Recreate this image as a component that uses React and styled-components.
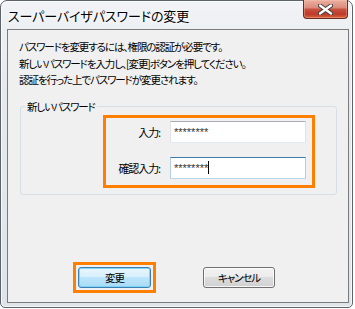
import React from 'react'
import styled, {createGlobalStyle} from 'styled-components'

const GlobalStyle = createGlobalStyle`
  html, body {
    margin: 0;
    padding: 0;
    background: #fff;
  }
  body {
    font-family: "Noto Sans CJK JP", "Noto Sans", sans-serif;
    font-feature-settings: "palt";
    color: #000;
  }
`

const Window = styled.div`
  box-sizing: border-box;
  width: 353px;
  height: 308px;
  display: flex;
  flex-direction: column;
  padding: 0 3px 4px 6px;
  border: 1px solid #5d636b;
  border-radius: 7px 7px 5px 5px;
  background: linear-gradient(180deg, #f1f3f6 0%, #e6eaee 25%, #dfe4e9 100%);
  box-shadow: inset 0 0 0 1px rgba(255, 255, 255, 0.7);
`

const TitleBar = styled.div`
  height: 28px;
  display: flex;
  align-items: flex-start;
`

const Title = styled.div`
  padding: 5px 0 0 1px;
  font-size: 13px;
  letter-spacing: -0.1px;
  line-height: 20px;
  text-shadow: 0 0 6px #fff, 0 0 3px #fff;
`

const CloseButton = styled.div`
  margin: -1px 1px 0 auto;
  width: 45px;
  height: 19px;
  box-sizing: border-box;
  display: flex;
  align-items: center;
  justify-content: center;
  border: 1px solid #6b2a22;
  border-top: none;
  border-radius: 0 0 4px 4px;
  background: linear-gradient(180deg, #eab0a2 0%, #dc8c7c 42%, #c7513f 52%, #bf3a2b 78%, #d7633c 100%);
  box-shadow: inset 0 0 0 1px rgba(255, 200, 180, 0.35);
`

const Client = styled.div`
  flex: 1;
  display: flex;
  flex-direction: column;
  border: 1px solid #7b7b7b;
  background: #f0f0f0;
  font-size: 10.5px;
  letter-spacing: -1.1px;
`

const Message = styled.p`
  margin: 0;
  padding: 9px 0 0 11px;
  line-height: 16.5px;
`

const Group = styled.fieldset`
  margin: 11px 11px 0 12px;
  padding: 1px 0 6px 4px;
  border: 1px solid #d5dfe5;
  border-radius: 3px;
  min-width: 0;
`

const Legend = styled.legend`
  padding: 0 2px;
  line-height: 14px;
`

const Highlight = styled.div`
  border: 3px solid #ff8000;
  padding: ${p => p.$pad || '2px'};
  width: ${p => p.$width || 'auto'};
  margin-left: ${p => p.$left || '0'};
`

const FieldGrid = styled.div`
  display: grid;
  grid-template-columns: 54px 136px;
  column-gap: 10px;
  row-gap: 14px;
  align-items: center;
`

const Label = styled.div`
  text-align: right;
  line-height: 14px;
  font-size: 11px;
  letter-spacing: -1.1px;
  white-space: nowrap;
`

const TextBox = styled.div`
  box-sizing: border-box;
  height: 22px;
  padding: 3px 3px 0;
  background: #fff;
  border: 1px solid;
  border-color: ${p => p.$focused ? '#3d7bad #b5cfe7 #b7d9ed #b5cfe7' : '#abadb3 #e2e3ea #e3e9ef #e2e3ea'};
  font-family: "Liberation Sans", sans-serif;
  font-size: 11px;
  letter-spacing: 0;
  line-height: 14px;
  color: #333;
  display: flex;
  align-items: flex-start;
`

const Caret = styled.span`
  display: inline-block;
  width: 1px;
  height: 13px;
  background: #000;
`

const ButtonRow = styled.div`
  margin-top: auto;
  padding: 0 0 9px 65px;
  display: flex;
  align-items: center;
  gap: 47px;
`

const Button = styled.div`
  box-sizing: border-box;
  width: ${p => p.$default ? '73px' : '72px'};
  height: 21px;
  display: flex;
  align-items: center;
  justify-content: center;
  border-radius: 3px;
  border: 1px solid ${p => p.$default ? '#3c7fb1' : '#707070'};
  background: ${p => p.$default
    ? 'linear-gradient(180deg, #e9f6fd 0%, #d8effb 45%, #bde5fb 50%, #a9dbf6 100%)'
    : 'linear-gradient(180deg, #f3f3f3 0%, #ebebeb 45%, #dddddd 50%, #d0d0d0 100%)'};
  box-shadow: inset 0 0 0 1px ${p => p.$default ? 'rgba(120, 210, 250, 0.9)' : 'rgba(255, 255, 255, 0.8)'};
`

const CloseGlyph = () => (
  <svg width="15" height="11" viewBox="0 0 15 11">
    <path d="M2 1.5 L13 9.5 M13 1.5 L2 9.5" stroke="#3b3b3b" strokeWidth="4.2" strokeLinecap="round" fill="none"/>
    <path d="M2 1.5 L13 9.5 M13 1.5 L2 9.5" stroke="#fff" strokeWidth="2.4" strokeLinecap="round" fill="none"/>
  </svg>
)

export default function App() {
  return (
    <>
      <GlobalStyle/>
      <Window>
        <TitleBar>
          <Title>スーパーバイザパスワードの変更</Title>
          <CloseButton><CloseGlyph/></CloseButton>
        </TitleBar>
        <Client>
          <Message>
            パスワードを変更するには、権限の認証が必要です。<br/>
            新しいパスワードを入力し、[変更]ボタンを押してください。<br/>
            認証を行った上でパスワードが変更されます。
          </Message>
          <Group>
            <Legend>新しいパスワード</Legend>
            <Highlight $width="200px" $left="78px" $pad="3px 6px 6px 0">
              <FieldGrid>
                <Label>入力:</Label>
                <TextBox>********</TextBox>
                <Label>確認入力:</Label>
                <TextBox $focused>********<Caret/></TextBox>
              </FieldGrid>
            </Highlight>
          </Group>
          <ButtonRow>
            <Highlight>
              <Button $default>変更</Button>
            </Highlight>
            <Button>キャンセル</Button>
          </ButtonRow>
        </Client>
      </Window>
    </>
  )
}
